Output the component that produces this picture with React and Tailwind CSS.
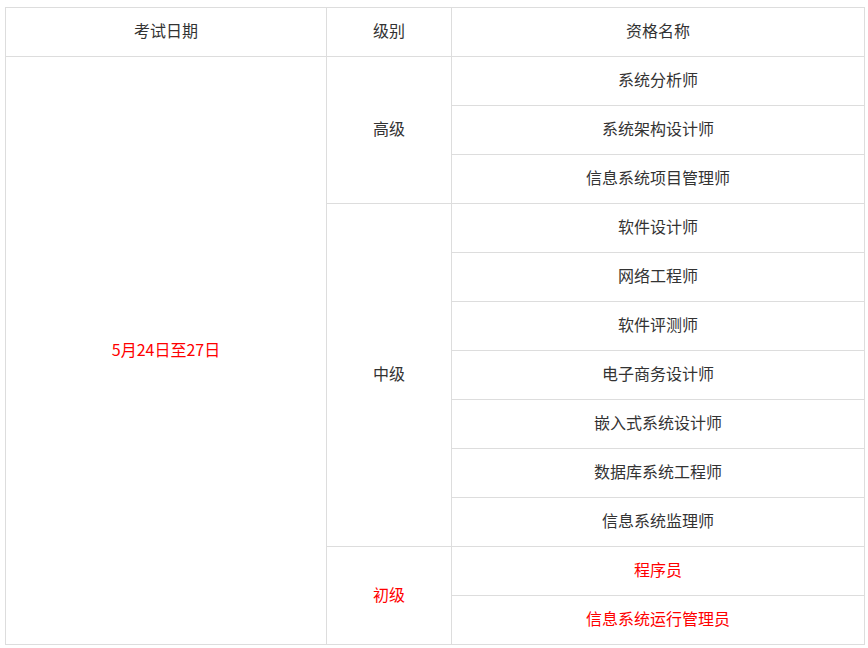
import React from 'react'

const rows = [
  { name: '系统分析师' },
  { name: '系统架构设计师' },
  { name: '信息系统项目管理师' },
  { name: '软件设计师' },
  { name: '网络工程师' },
  { name: '软件评测师' },
  { name: '电子商务设计师' },
  { name: '嵌入式系统设计师' },
  { name: '数据库系统工程师' },
  { name: '信息系统监理师' },
  { name: '程序员', red: true },
  { name: '信息系统运行管理员', red: true },
]

const levels = {
  0: { label: '高级', span: 3 },
  3: { label: '中级', span: 7 },
  10: { label: '初级', span: 2, red: true },
}

const cell = 'border border-[#dddddd] text-center align-middle px-0 pt-0 pb-[4px] leading-[20px]'

export default function App() {
  return (
    <div
      className="pt-[7px] pl-[5px] bg-white text-[16px] text-[#333333]"
      style={{ fontFamily: '"Noto Sans CJK SC", "Noto Sans", sans-serif' }}
    >
      <table className="border-collapse w-[860px] table-fixed">
        <colgroup>
          <col className="w-[321px]" />
          <col className="w-[125px]" />
          <col />
        </colgroup>
        <thead>
          <tr className="h-[49px]">
            <th className={`${cell} font-normal`}>考试日期</th>
            <th className={`${cell} font-normal`}>级别</th>
            <th className={`${cell} font-normal`}>资格名称</th>
          </tr>
        </thead>
        <tbody>
          {rows.map((r, i) => (
            <tr key={r.name} className="h-[49px]">
              {i === 0 && (
                <td rowSpan={12} className={`${cell} text-[#ff0000]`}>
                  5月24日至27日
                </td>
              )}
              {levels[i] && (
                <td
                  rowSpan={levels[i].span}
                  className={`${cell} ${levels[i].red ? 'text-[#ff0000]' : ''}`}
                >
                  {levels[i].label}
                </td>
              )}
              <td className={`${cell} ${r.red ? 'text-[#ff0000]' : ''}`}>{r.name}</td>
            </tr>
          ))}
        </tbody>
      </table>
    </div>
  )
}
